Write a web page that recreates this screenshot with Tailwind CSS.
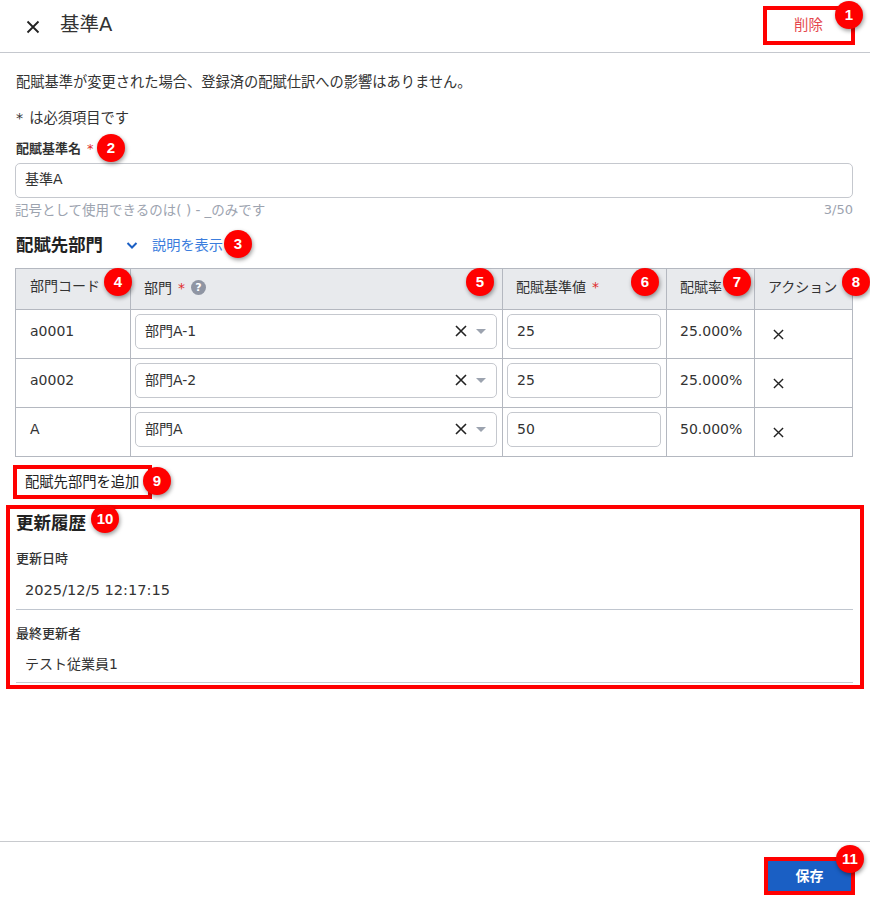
<!DOCTYPE html>
<html lang="ja">
<head>
  <meta charset="UTF-8" />
  <title>基準A</title>
  <script src="https://cdn.jsdelivr.net/npm/@tailwindcss/browser@4"></script>
</head>
<body class="bg-white text-[#333] font-['DejaVu_Sans','Noto_Sans_CJK_JP',sans-serif] text-sm">
<div class="relative w-[870px] h-[910px] overflow-hidden flex flex-col">

  <!-- Header -->
  <header class="h-[53px] shrink-0 border-b border-[#c5c8ce] flex items-center pl-[26px] pr-[19px]">
    <svg class="w-[14px] h-[14px] mt-[1px] text-[#222]" viewBox="0 0 14 14" fill="none" stroke="currentColor" stroke-width="1.8"><path d="M1.500 1.500l11 11M12.500 1.500l-11 11"/></svg>
    <h1 class="ml-[20px] text-[19.5px] leading-6 -mt-[3px] text-[#333]">基準A</h1>
    <button class="ml-auto w-[85px] h-8 text-[14.400px] text-[#e5484d] -mt-[2px]">削除</button>
  </header>

  <!-- Form -->
  <main class="flex-1 px-[16px] pt-[19px]">
    <p class="leading-5 text-[14.250px]">配賦基準が変更された場合、登録済の配賦仕訳への影響はありません。</p>
    <p class="mt-4 leading-5 text-[14.250px]">*<span class="ml-[6px]">は必須項目です</span></p>
    <label class="block mt-[11px] text-[13px] font-bold leading-5">配賦基準名<span class="ml-[6px] text-[#e02b2b] font-normal">*</span></label>
    <input value="基準A" class="block mt-[4px] -ml-px w-[838px] h-[35px] border border-[#c5c8ce] rounded-[5px] px-[9px] pb-[6px] text-sm text-[#333]" />
    <div class="flex justify-between mt-[2px] -ml-px w-[838px] text-[13.500px] leading-5 text-[#9ca3af]">
      <span>記号として使用できるのは( ) - _のみです</span><span class="text-[13px]">3/50</span>
    </div>

    <div class="flex items-center mt-[13px] h-6">
      <h2 class="text-[17.400px] font-bold text-[#222] w-[110px]">配賦先部門</h2>
      <svg class="w-3 h-3 text-[#1a5fc4]" viewBox="0 0 12 12" fill="none" stroke="currentColor" stroke-width="2"><path d="M1.500 4l4.500 4.500L10.500 4"/></svg>
      <a class="ml-[14px] text-[14.200px] text-[#3b7ddd]">説明を表示</a>
    </div>

    <table class="mt-[11px] -ml-px w-[837px] table-fixed border-collapse">
      <colgroup><col class="w-[115px]"><col class="w-[372px]"><col class="w-[164px]"><col class="w-[88px]"><col class="w-[98px]"></colgroup>
      <thead>
        <tr class="h-[41px] bg-[#e8eaed] text-left">
          <th class="border border-[#b4b8c0] pl-[14px] pb-[6px] font-normal">部門コード</th>
          <th class="border border-[#b4b8c0] pl-[13px] pb-[3px] font-normal"><span class="flex items-center">部門<span class="text-[#e02b2b] ml-[6px]">*</span><span class="ml-[6px] w-[15px] h-[15px] rounded-full bg-[#8f95a3] text-white text-[11px] font-bold leading-[15px] text-center">?</span></span></th>
          <th class="border border-[#b4b8c0] pl-[13px] pb-[5px] font-normal">配賦基準値<span class="text-[#e02b2b] ml-[6px]">*</span></th>
          <th class="border border-[#b4b8c0] pl-[13px] pb-[5px] font-normal">配賦率</th>
          <th class="border border-[#b4b8c0] pl-[13px] pb-[5px] font-normal">アクション</th>
        </tr>
      </thead>
      <tbody>
        <tr class="h-[49px]">
          <td class="border border-[#b4b8c0] pl-[14px] pb-[7px]">a0001</td>
          <td class="border border-[#b4b8c0] pl-[4px] pr-[5px]">
            <div class="flex items-center h-[35px] mb-[5px] border border-[#c5c8ce] rounded-[5px] pl-[9px] pr-[10px] pb-[1px]">部門A-1<svg class="ml-auto w-[12px] h-[12px] text-[#222]" viewBox="0 0 12 12" fill="none" stroke="currentColor" stroke-width="1.600"><path d="M1 1l10 10M11 1L1 11"/></svg><span class="ml-[9px] w-0 h-0 border-x-[5px] border-x-transparent border-t-[5px] border-t-[#9ca3af]"></span></div>
          </td>
          <td class="border border-[#b4b8c0] px-[4px]"><input value="25" class="block w-[154px] h-[35px] mb-[5px] border border-[#c5c8ce] rounded-[5px] px-[9px] pb-[1px] text-sm" /></td>
          <td class="border border-[#b4b8c0] pl-[13px] pb-[7px]">25.000%</td>
          <td class="border border-[#b4b8c0] pl-[18px]"><svg class="w-[11px] h-[11px] text-[#222]" viewBox="0 0 12 12" fill="none" stroke="currentColor" stroke-width="1.500"><path d="M1 1l10 10M11 1L1 11"/></svg></td>
        </tr>
        <tr class="h-[49px]">
          <td class="border border-[#b4b8c0] pl-[14px] pb-[7px]">a0002</td>
          <td class="border border-[#b4b8c0] pl-[4px] pr-[5px]">
            <div class="flex items-center h-[35px] mb-[5px] border border-[#c5c8ce] rounded-[5px] pl-[9px] pr-[10px] pb-[1px]">部門A-2<svg class="ml-auto w-[12px] h-[12px] text-[#222]" viewBox="0 0 12 12" fill="none" stroke="currentColor" stroke-width="1.600"><path d="M1 1l10 10M11 1L1 11"/></svg><span class="ml-[9px] w-0 h-0 border-x-[5px] border-x-transparent border-t-[5px] border-t-[#9ca3af]"></span></div>
          </td>
          <td class="border border-[#b4b8c0] px-[4px]"><input value="25" class="block w-[154px] h-[35px] mb-[5px] border border-[#c5c8ce] rounded-[5px] px-[9px] pb-[1px] text-sm" /></td>
          <td class="border border-[#b4b8c0] pl-[13px] pb-[7px]">25.000%</td>
          <td class="border border-[#b4b8c0] pl-[18px]"><svg class="w-[11px] h-[11px] text-[#222]" viewBox="0 0 12 12" fill="none" stroke="currentColor" stroke-width="1.500"><path d="M1 1l10 10M11 1L1 11"/></svg></td>
        </tr>
        <tr class="h-[49px]">
          <td class="border border-[#b4b8c0] pl-[14px] pb-[7px]">A</td>
          <td class="border border-[#b4b8c0] pl-[4px] pr-[5px]">
            <div class="flex items-center h-[35px] mb-[5px] border border-[#c5c8ce] rounded-[5px] pl-[9px] pr-[10px] pb-[1px]">部門A<svg class="ml-auto w-[12px] h-[12px] text-[#222]" viewBox="0 0 12 12" fill="none" stroke="currentColor" stroke-width="1.600"><path d="M1 1l10 10M11 1L1 11"/></svg><span class="ml-[9px] w-0 h-0 border-x-[5px] border-x-transparent border-t-[5px] border-t-[#9ca3af]"></span></div>
          </td>
          <td class="border border-[#b4b8c0] px-[4px]"><input value="50" class="block w-[154px] h-[35px] mb-[5px] border border-[#c5c8ce] rounded-[5px] px-[9px] pb-[1px] text-sm" /></td>
          <td class="border border-[#b4b8c0] pl-[13px] pb-[7px]">50.000%</td>
          <td class="border border-[#b4b8c0] pl-[18px]"><svg class="w-[11px] h-[11px] text-[#222]" viewBox="0 0 12 12" fill="none" stroke="currentColor" stroke-width="1.500"><path d="M1 1l10 10M11 1L1 11"/></svg></td>
        </tr>
      </tbody>
    </table>

    <button class="block mt-[15px] ml-[9px] leading-5 text-[14.300px] text-[#222]">配賦先部門を追加</button>

    <!-- History -->
    <section class="mt-[19px]">
      <h2 class="text-[17.500px] font-bold text-[#222] leading-6">更新履歴</h2>
      <h3 class="mt-[14px] text-[13px] leading-5 font-medium">更新日時</h3>
      <p class="mt-[11px] pl-[9px] leading-5 text-[14.600px] pb-[9px] border-b border-[#c0c6cf] w-[837px]">2025/12/5 12:17:15</p>
      <h3 class="mt-[14px] text-[13px] leading-5 font-medium">最終更新者</h3>
      <p class="mt-[10px] pl-[9px] leading-5 pb-[8px] border-b border-[#c8cace] w-[837px]">テスト従業員1</p>
    </section>
  </main>

  <!-- Footer -->
  <footer class="h-[69px] shrink-0 border-t border-[#c8cace] flex justify-end pt-[19px] pr-[19px]">
    <button class="w-[83px] h-[30px] bg-[#1a5fc4] text-white text-sm font-semibold">保存</button>
  </footer>

  <!-- Annotations -->
  <div class="absolute left-[763px] top-[6px] w-[92px] h-[39px] border-4 border-[#ff0000]"></div>
  <div class="absolute left-[13px] top-[465px] w-[139px] h-[34px] border-4 border-[#ff0000]"></div>
  <div class="absolute left-[6px] top-[505px] w-[858px] h-[184px] border-4 border-[#ff0000]"></div>
  <div class="absolute left-[764px] top-[857px] w-[91px] h-[38px] border-4 border-[#ff0000]"></div>

  <span class="absolute left-[835px] top-[1px] w-[28px] h-[28px] rounded-full bg-[#ff0000] text-white text-[15px] font-bold leading-[28px] text-center shadow-[1px_2px_4px_rgba(0,0,0,0.4)] font-['Liberation_Sans',sans-serif]">1</span>
  <span class="absolute left-[97px] top-[134px] w-[28px] h-[28px] rounded-full bg-[#ff0000] text-white text-[15px] font-bold leading-[28px] text-center shadow-[1px_2px_4px_rgba(0,0,0,0.4)] font-['Liberation_Sans',sans-serif]">2</span>
  <span class="absolute left-[224px] top-[230px] w-[28px] h-[28px] rounded-full bg-[#ff0000] text-white text-[15px] font-bold leading-[28px] text-center shadow-[1px_2px_4px_rgba(0,0,0,0.4)] font-['Liberation_Sans',sans-serif]">3</span>
  <span class="absolute left-[104px] top-[268px] w-[28px] h-[28px] rounded-full bg-[#ff0000] text-white text-[15px] font-bold leading-[28px] text-center shadow-[1px_2px_4px_rgba(0,0,0,0.4)] font-['Liberation_Sans',sans-serif]">4</span>
  <span class="absolute left-[466px] top-[268px] w-[28px] h-[28px] rounded-full bg-[#ff0000] text-white text-[15px] font-bold leading-[28px] text-center shadow-[1px_2px_4px_rgba(0,0,0,0.4)] font-['Liberation_Sans',sans-serif]">5</span>
  <span class="absolute left-[631px] top-[268px] w-[28px] h-[28px] rounded-full bg-[#ff0000] text-white text-[15px] font-bold leading-[28px] text-center shadow-[1px_2px_4px_rgba(0,0,0,0.4)] font-['Liberation_Sans',sans-serif]">6</span>
  <span class="absolute left-[723px] top-[268px] w-[28px] h-[28px] rounded-full bg-[#ff0000] text-white text-[15px] font-bold leading-[28px] text-center shadow-[1px_2px_4px_rgba(0,0,0,0.4)] font-['Liberation_Sans',sans-serif]">7</span>
  <span class="absolute left-[842px] top-[268px] w-[28px] h-[28px] rounded-full bg-[#ff0000] text-white text-[15px] font-bold leading-[28px] text-center shadow-[1px_2px_4px_rgba(0,0,0,0.4)] font-['Liberation_Sans',sans-serif]">8</span>
  <span class="absolute left-[143px] top-[467px] w-[28px] h-[28px] rounded-full bg-[#ff0000] text-white text-[15px] font-bold leading-[28px] text-center shadow-[1px_2px_4px_rgba(0,0,0,0.4)] font-['Liberation_Sans',sans-serif]">9</span>
  <span class="absolute left-[91px] top-[505px] w-[28px] h-[28px] rounded-full bg-[#ff0000] text-white text-[15px] font-bold leading-[28px] text-center shadow-[1px_2px_4px_rgba(0,0,0,0.4)] font-['Liberation_Sans',sans-serif]">10</span>
  <span class="absolute left-[836px] top-[845px] w-[28px] h-[28px] rounded-full bg-[#ff0000] text-white text-[15px] font-bold leading-[28px] text-center shadow-[1px_2px_4px_rgba(0,0,0,0.4)] font-['Liberation_Sans',sans-serif]">11</span>
</div>
</body>
</html>
